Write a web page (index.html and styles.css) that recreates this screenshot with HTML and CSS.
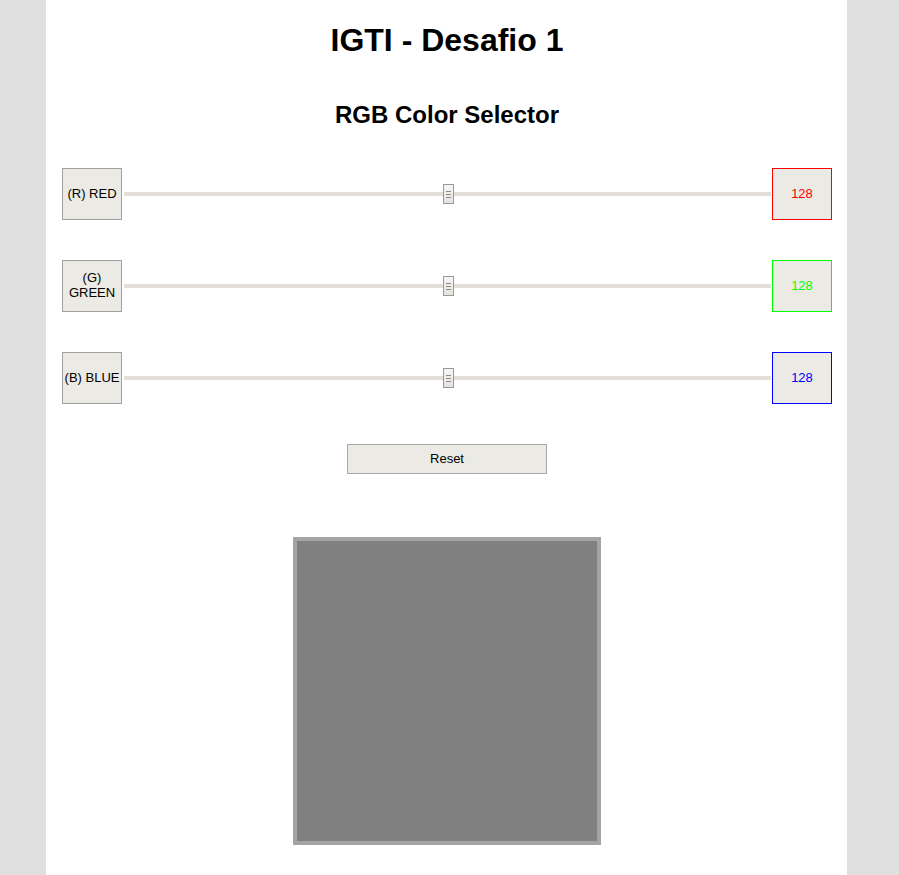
FILE: index.html
```html
<!DOCTYPE html>
<html lang="pt">
<head>
<meta charset="utf-8">
<title>IGTI - Desafio 1</title>
<link rel="stylesheet" href="styles.css">
</head>
<body>
<main class="page">
  <h1 class="title">IGTI - Desafio 1</h1>
  <h2 class="subtitle">RGB Color Selector</h2>
  <section class="rows">
    <div class="row">
      <div class="label">(R) RED</div>
      <div class="slider"><div class="track"></div><div class="thumb"><span></span><span></span><span></span></div></div>
      <div class="value value-red">128</div>
    </div>
    <div class="row">
      <div class="label">(G) GREEN</div>
      <div class="slider"><div class="track"></div><div class="thumb"><span></span><span></span><span></span></div></div>
      <div class="value value-green">128</div>
    </div>
    <div class="row">
      <div class="label">(B) BLUE</div>
      <div class="slider"><div class="track"></div><div class="thumb"><span></span><span></span><span></span></div></div>
      <div class="value value-blue">128</div>
    </div>
  </section>
  <div class="actions"><button class="reset" type="button">Reset</button></div>
  <div class="preview-wrap"><div class="preview" style="background: rgb(128,128,128)"></div></div>
</main>
</body>
</html>
```
FILE: styles.css
```css
html, body {
  margin: 0;
  padding: 0;
}
body {
  background: #e0e0e0;
  font-family: "Liberation Sans", Arial, sans-serif;
  color: #000;
}
.page {
  width: 801px;
  margin-left: 46px;
  min-height: 875px;
  background: #fff;
  box-sizing: border-box;
  padding: 20px 15px 0 16px;
}
.title {
  margin: 0;
  text-align: center;
  font-size: 32px;
  line-height: 40px;
  font-weight: bold;
}
.subtitle {
  margin: 41px 0 0;
  text-align: center;
  font-size: 24px;
  line-height: 28px;
  font-weight: bold;
}
.rows {
  margin-top: 39px;
  display: flex;
  flex-direction: column;
  gap: 40px;
}
.row {
  display: flex;
  align-items: center;
  height: 52px;
}
.label, .value {
  width: 60px;
  height: 52px;
  box-sizing: border-box;
  border: 1px solid #a0a0a0;
  background: #ebeae4;
  display: flex;
  align-items: center;
  justify-content: center;
  text-align: center;
  font-size: 13px;
  line-height: 15px;
  padding: 0 0 2px;
  flex: none;
}
.value-red { border-color: #ff0000; color: #ff0000; }
.value-green { border-color: #00ff00; color: #00ff00; }
.value-blue { border-color: #0000ff; color: #0000ff; }
.slider {
  flex: 1;
  height: 20px;
  margin: 0 1px 0 2px;
  position: relative;
  display: flex;
  align-items: center;
}
.track {
  width: 100%;
  height: 4px;
  background: #e2ded8;
}
.thumb {
  position: absolute;
  left: 319px;
  top: 0;
  width: 11px;
  height: 20px;
  box-sizing: border-box;
  border: 1px solid #999;
  background: linear-gradient(#f6f6f4, #e4e2dc);
  display: flex;
  flex-direction: column;
  align-items: center;
  justify-content: center;
  gap: 2px;
}
.thumb span {
  display: block;
  width: 5px;
  height: 1px;
  background: #8a8a8a;
}
.actions {
  margin-top: 40px;
  display: flex;
  justify-content: center;
}
.reset {
  width: 200px;
  height: 30px;
  border: 1px solid #a8a8a8;
  background: #ebeae4;
  font-family: "Liberation Sans", Arial, sans-serif;
  font-size: 13px;
  color: #000;
  padding: 0 0 2px;
}
.preview-wrap {
  margin-top: 63px;
  display: flex;
  justify-content: center;
}
.preview {
  width: 308px;
  height: 308px;
  box-sizing: border-box;
  border: 4px solid #a4a4a4;
}
```
